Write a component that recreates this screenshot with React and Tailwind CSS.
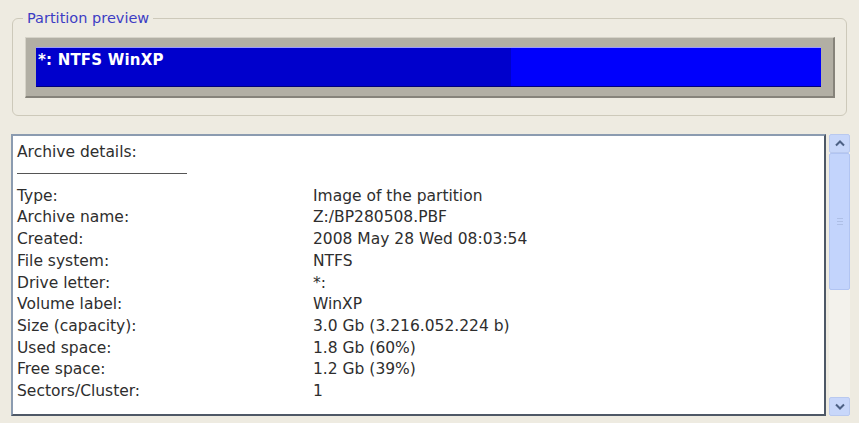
const details = [
  ["Type:", "Image of the partition"],
  ["Archive name:", "Z:/BP280508.PBF"],
  ["Created:", "2008 May 28 Wed 08:03:54"],
  ["File system:", "NTFS"],
  ["Drive letter:", "*:"],
  ["Volume label:", "WinXP"],
  ["Size (capacity):", "3.0 Gb (3.216.052.224 b)"],
  ["Used space:", "1.8 Gb (60%)"],
  ["Free space:", "1.2 Gb (39%)"],
  ["Sectors/Cluster:", "1"],
];

function Chevron({ down }) {
  return (
    <svg width="10" height="7" viewBox="0 0 10 7">
      <path
        d={down ? "M1 1.5 L5 5.5 L9 1.5" : "M1 5.5 L5 1.5 L9 5.5"}
        fill="none"
        stroke="#4d6185"
        strokeWidth="2"
      />
    </svg>
  );
}

function ScrollBar() {
  return (
    <div className="flex w-[21px] flex-col bg-[#f3f2ec]">
      <div className="flex h-[19px] items-center justify-center rounded-[2px] border border-[#b9c9ef] bg-[#c8d7fa]">
        <Chevron />
      </div>
      <div className="flex h-[137px] items-center justify-center rounded-[2px] border border-[#b1c4f2] bg-[#c3d4fc]">
        <div className="flex flex-col gap-[2px]">
          <div className="h-px w-[6px] bg-[#aebfe6]" />
          <div className="h-px w-[6px] bg-[#aebfe6]" />
          <div className="h-px w-[6px] bg-[#aebfe6]" />
        </div>
      </div>
      <div className="flex-1" />
      <div className="flex h-[19px] items-center justify-center rounded-[2px] border border-[#b9c9ef] bg-[#c8d7fa]">
        <Chevron down />
      </div>
    </div>
  );
}

export default function App() {
  return (
    <div className="h-[423px] w-[859px] overflow-hidden bg-[#eeebe1] pt-[8px] font-['DejaVu_Sans',sans-serif]">
      <fieldset className="mx-[12px] h-[108px] rounded-[6px] border border-[#cdc9ba] pb-[17px] pl-[12px] pr-[11px] pt-[9px]">
        <legend className="-ml-[2px] px-[4px] text-[14.5px] leading-[20px] text-[#3d3dc4]">
          Partition preview
        </legend>
        <div className="h-[61px] border-b-2 border-l border-r-2 border-t border-b-[#86837a] border-l-[#d6d3c8] border-r-[#86837a] border-t-[#d6d3c8] bg-[#b2afa4] pb-[9px] pl-[10px] pr-[12px] pt-[9px]">
          <div className="flex h-[40px] border-b border-t border-b-[#00007a] border-t-[#9c9cff]">
            <div className="w-[475px] bg-[#0000cc] pl-[2px] pt-[2px] text-[15px] font-bold leading-[20px] tracking-[0.2px] text-white">
              *: NTFS WinXP
            </div>
            <div className="flex-1 bg-[#0000fc]" />
          </div>
        </div>
      </fieldset>

      <div className="ml-[11px] mt-[18px] flex h-[282px] w-[839px] gap-[3px]">
        <div className="flex-1 border-2 border-b-[#4e5866] border-l-[#8b9bb0] border-r-[#4e5866] border-t-[#8b9bb0] bg-white pl-[4px] pt-[6px] text-[15.5px] leading-[21.7px] text-[#2e2e2e]">
          <div>Archive details:</div>
          <div className="mb-[12px] mt-[9px] h-px w-[170px] bg-[#555555]" />
          {details.map(([label, value]) => (
            <div key={label} className="grid grid-cols-[296px_1fr]">
              <span>{label}</span>
              <span>{value}</span>
            </div>
          ))}
        </div>
        <ScrollBar />
      </div>
    </div>
  );
}
